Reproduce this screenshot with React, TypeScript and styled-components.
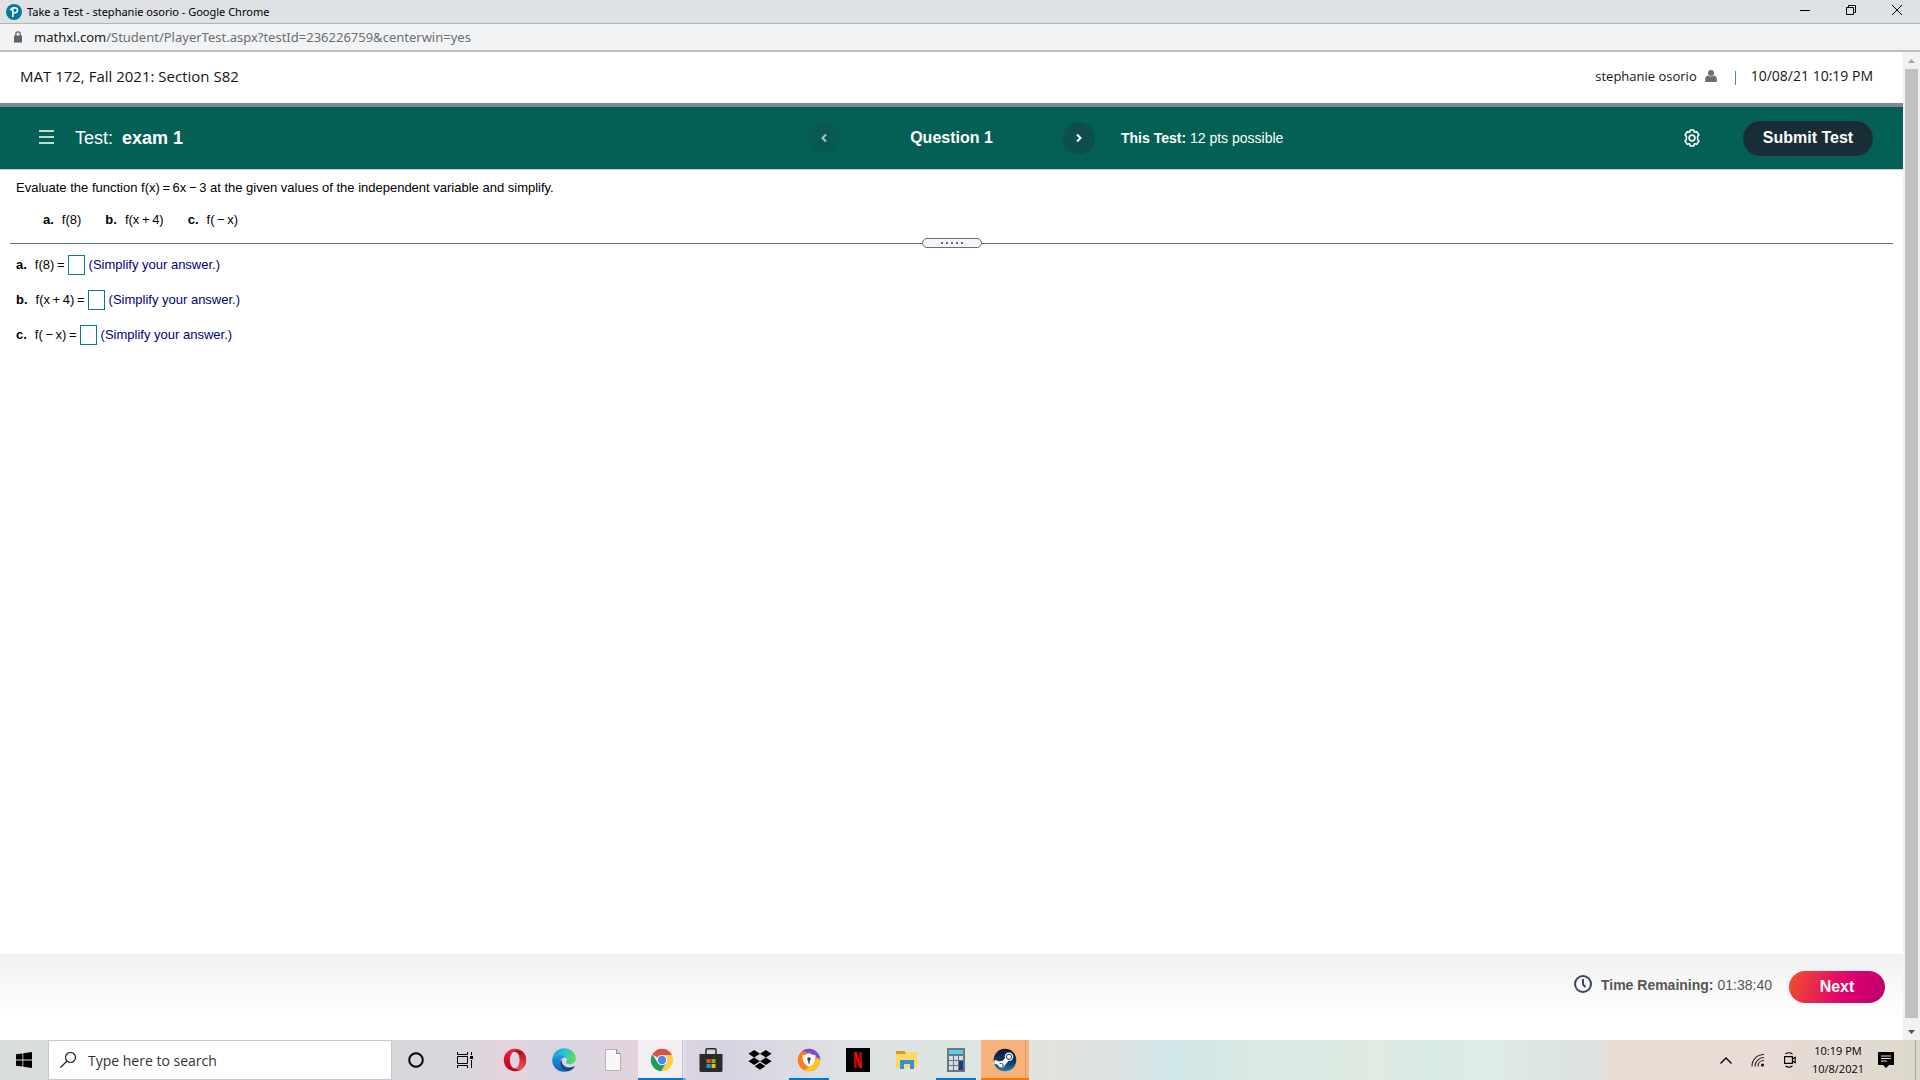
import React, { ReactNode } from "react";
import styled, { createGlobalStyle, css } from "styled-components";

const arial = '"Liberation Sans", Arial, sans-serif';
const system = '"Open Sans", "Noto Sans", sans-serif';
const chrome = '"Noto Sans", "Open Sans", sans-serif';

const GlobalStyle = createGlobalStyle`
  * { box-sizing: border-box; }
  body { margin: 0; background: #fff; color: #000; font-family: ${arial}; }
  button { font: inherit; color: inherit; border: 0; padding: 0; background: none; cursor: pointer; }
  svg { display: block; flex: none; }
`;

const Screen = styled.div`
  display: flex;
  flex-direction: column;
  height: 100vh;
  overflow: hidden;
`;

const TitleBar = styled.div`
  flex: none;
  display: flex;
  align-items: center;
  height: 24px;
  padding-left: 6px;
  gap: 5px;
  background: #dee1e6;
  border-bottom: 1px solid #b1b3b6;
  font: 11px/22px ${chrome};
`;

const WindowButtons = styled.div`
  display: flex;
  margin-left: auto;
  align-self: stretch;
`;

const WindowButton = styled.button`
  width: 46px;
  height: 20px;
  display: grid;
  place-items: center;
`;

const AddressBar = styled.div`
  flex: none;
  display: flex;
  align-items: center;
  gap: 12px;
  height: 28px;
  padding-left: 14px;
  background: #f1f3f4;
  border-bottom: 2px solid #bcbdbf;
  font: 13px/26px ${chrome};
  color: #6b6e73;
`;

const Host = styled.span`
  color: #202124;
`;

const Viewport = styled.div`
  flex: 1;
  min-height: 0;
  display: flex;
`;

const Page = styled.div`
  flex: 1;
  min-width: 0;
  display: flex;
  flex-direction: column;
`;

const Scrollbar = styled.div`
  flex: none;
  width: 17px;
  display: flex;
  flex-direction: column;
  align-items: center;
  background: #f1f1f1;
`;

const ScrollArrow = styled.button`
  width: 17px;
  height: 17px;
  display: grid;
  place-items: center;
`;

const ScrollThumb = styled.div`
  flex: 1;
  width: 13px;
  margin-bottom: 5px;
  background: #c1c1c1;
`;

const CourseHeader = styled.header`
  display: flex;
  align-items: center;
  height: 51px;
  padding: 0 30px 4px 20px;
  font: 15px/20px ${system};
  color: #151515;
`;

const CourseName = styled.h1`
  flex: 1;
  margin: 0;
  font: inherit;
`;

const UserName = styled.span`
  display: flex;
  align-items: center;
  gap: 8px;
  font-size: 13px;
`;

const Separator = styled.span`
  width: 1px;
  height: 14px;
  margin: 4px 15px 0 18px;
  background: #3b8fb5;
`;

const DateTime = styled.time`
  font-size: 14px;
`;

const TestBar = styled.div`
  display: grid;
  grid-template-columns: 1fr auto 1fr;
  align-items: center;
  height: 67px;
  padding: 0 30px;
  background: #046055;
  border-top: 4px solid #7f8995;
  border-bottom: 1px solid #c7d3dc;
  color: #fff;
`;

const TestTitle = styled.div`
  display: flex;
  align-items: center;
  gap: 20px;
  padding-left: 9px;
  font-size: 18px;
  line-height: 24px;

  b { margin-left: 4px; }
`;

const QuestionNav = styled.nav`
  display: flex;
  align-items: center;
  justify-content: space-between;
  width: 287px;
  font: bold 16px/24px ${arial};
`;

const RoundButton = styled.button`
  width: 32px;
  height: 32px;
  display: grid;
  place-items: center;
  border-radius: 50%;
  background: #0f4e4b;

  &:disabled {
    background: #075a51;
    color: #a5c5c1;
  }
`;

const BarRight = styled.div`
  display: flex;
  align-items: center;
  padding-left: 26px;
  font-size: 14px;
`;

const Points = styled.span`
  flex: 1;
`;

const SubmitButton = styled.button`
  width: 130px;
  height: 35px;
  margin-left: 42px;
  border-radius: 18px;
  background: #1a2c36;
  font: bold 16px/24px ${arial};
`;

const Exercise = styled.main`
  flex: 1;
  padding: 9px 10px 0;
  font-size: 13px;
  line-height: 18px;
`;

const Prompt = styled.p`
  margin: 0;
  padding-left: 6px;
`;

const Parts = styled.div`
  display: flex;
  gap: 24px;
  padding: 14px 0 0 33px;

  b { margin-right: 8px; }
`;

const Divider = styled.div`
  display: flex;
  align-items: center;
  margin-top: 9px;

  &::before, &::after {
    content: "";
    flex: 1;
    height: 1px;
    background: #64707d;
  }
`;

const DragHandle = styled.button`
  width: 60px;
  height: 10px;
  display: flex;
  align-items: center;
  justify-content: center;
  gap: 3px;
  border: 1px solid #64707d;
  border-radius: 5px;
  background: #f4f5f8;

  i { width: 2px; height: 2px; background: #64707d; }
`;

const Answers = styled.div`
  display: flex;
  flex-direction: column;
  gap: 15px;
  padding: 7px 0 0 6px;
`;

const AnswerRow = styled.label`
  display: flex;
  align-items: center;
  height: 20px;

  b { margin-right: 8px; }
`;

const AnswerBox = styled.input`
  width: 17px;
  height: 20px;
  margin: 0 4px 0 3px;
  padding: 0;
  border: 1px solid #047a9c;
  border-radius: 0;
  background: #fff;
`;

const Hint = styled.span`
  color: #00007f;
`;

const Footer = styled.footer`
  display: flex;
  justify-content: flex-end;
  align-items: flex-start;
  height: 86px;
  padding: 17px 18px 0 0;
  background: linear-gradient(#f1f1f1, #fff 75%);
  font-size: 14px;
  color: #555;
`;

const Timer = styled.div`
  display: flex;
  align-items: center;
  height: 28px;
  margin-right: 17px;

  svg { margin: 0 9px 3px 0; }
  b { margin-right: 4px; }
`;

const NextButton = styled.button`
  width: 96px;
  height: 32px;
  border-radius: 16px;
  background: linear-gradient(110deg, #ef4635 8%, #df006f 60%, #b9006f);
  color: #fff;
  font: bold 16px/24px ${arial};
`;

const Taskbar = styled.div`
  flex: none;
  display: flex;
  height: 40px;
  background: linear-gradient(90deg, #dadddd 0, #d6d8dc 400px, #d8d5dc 460px, #e4d3dc 500px, #d9d6e3 560px, #e2d2dc 640px, #d6d3e2 720px, #dde2e3 850px, #dce5df 980px, #e1e3dd 1050px, #dce2e0 1111px, #d1e6e7 1163px, #d3e7e5 1206px, #dceae5 1263px, #d8eae3 1298px, #e0eae2 1367px, #d9ece5 1423px, #dfebe5 1497px, #dce3e0 1579px, #dfe1de 1600px, #eadbd4 1615px, #e9dcd5 1750px, #ddd8cc 1920px);
  font-family: ${system};
`;

const SearchBox = styled.label`
  display: flex;
  align-items: center;
  gap: 12px;
  width: 344px;
  padding-left: 11px;
  border: 1px solid #c6c8c9;
  background: #fff;

  input {
    flex: 1;
    min-width: 0;
    border: 0;
    padding: 2px 0 0;
    outline: 0;
    background: none;
    font: 14px/20px ${system};
  }
  input::placeholder { color: #333; opacity: 1; }
`;

const TaskButton = styled.button<{ $state?: "open" | "active" | "alert"; $width?: number }>`
  flex: none;
  width: ${(p) => p.$width ?? 49}px;
  display: grid;
  place-items: center;

  ${(p) => p.$state === "open" && css`background: linear-gradient(#0078d7, #0078d7) center bottom / 40px 2px no-repeat;`}
  ${(p) => p.$state === "active" && css`
    background:
      linear-gradient(90deg, #0078d7 45px, #6fa9df 45px) right bottom / 48px 2px no-repeat,
      linear-gradient(90deg, #f3eef2 44px, #cbc0cf 44px, #cbc0cf 45px, #e0dbe6 45px) right top / 48px 100% no-repeat;
  `}
  ${(p) => p.$state === "alert" && css`
    background:
      linear-gradient(#ff7300, #ff7300) right bottom / 48px 2px no-repeat,
      linear-gradient(90deg, #f7b27c 44px, #dd9a68 44px, #dd9a68 45px, #f7b27c 45px) right top / 48px 100% no-repeat;
  `}
`;

const Tray = styled.div`
  display: flex;
  align-items: center;
  margin-left: auto;
`;

const TrayButton = styled.button`
  width: 32px;
  height: 40px;
  display: grid;
  place-items: center;
`;

const Clock = styled.time`
  width: 64px;
  text-align: center;
  font-size: 11px;
  line-height: 18px;
`;

const ShowDesktop = styled.button`
  width: 5px;
  height: 40px;
  margin-left: 13px;
  border-left: 1px solid #a9a59c;
`;

/* Operators in formulas are set with thin spaces. */
const answers = [
  { part: "a.", text: "f(8)\u2009=" },
  { part: "b.", text: "f(x\u2009+\u20094)\u2009=" },
  { part: "c.", text: "f(\u2009−\u2009x)\u2009=" },
];

const Chevron = ({ right }: { right?: boolean }) => (
  <svg width="8" height="10" viewBox="0 0 8 10" fill="none" stroke="currentColor" strokeWidth="2">
    <path d={right ? "M2 1.5 5.5 5 2 8.5" : "M6 1.5 2.5 5 6 8.5"} />
  </svg>
);

const OperaIcon = () => (
  <svg width="24" height="24" viewBox="0 0 24 24">
    <defs>
      <linearGradient id="opera" x1="0" y1="0" x2="0" y2="1">
        <stop offset="0" stopColor="#f5213a" />
        <stop offset="1" stopColor="#b30016" />
      </linearGradient>
      <linearGradient id="operaSide" x1="0" y1="0" x2="0" y2="1">
        <stop offset="0" stopColor="#a60f1b" />
        <stop offset="1" stopColor="#ff4b50" />
      </linearGradient>
    </defs>
    <path fillRule="evenodd" fill="url(#opera)" d="M12 .8a11.200 11.200 0 1 0 0 22.400A11.200 11.200 0 0 0 12 .8Zm0 2.800c3 0 4.800 3.800 4.800 8.400s-1.800 8.400-4.800 8.400S7 16.600 7 12s2-8.400 5-8.400Z" />
    <path fill="url(#operaSide)" d="M10 4c3-3 8-1.500 10 0 4 4 4 12 0 16-3 2-7 2.500-10 0 4.500 1.500 6.800-3 6.800-8S14 2.500 10 4Z" />
  </svg>
);

const EdgeIcon = () => (
  <svg width="24" height="24" viewBox="0 0 24 24">
    <defs>
      <linearGradient id="edgeTop" x1="0" y1=".3" x2="1" y2=".5">
        <stop offset="0" stopColor="#1f9fe0" />
        <stop offset=".5" stopColor="#2cc3d2" />
        <stop offset="1" stopColor="#62dc55" />
      </linearGradient>
      <linearGradient id="edgeSide" x1="0" y1="0" x2="0" y2="1">
        <stop offset="0" stopColor="#1b9de2" />
        <stop offset="1" stopColor="#1160b4" />
      </linearGradient>
    </defs>
    <path fill="url(#edgeTop)" d="M.3 11C1 4.500 6 .2 12 .2 19 .2 23.800 5 23.800 10.300c0 3.500-2.600 6-6 6-2.700 0-3.900-1-3.900-1.600 0-.5 1-1 1-2.600 0-2.700-3-4.900-6.700-4.900C4.500 7.200 1.500 8.700.3 11Z" />
    <path fill="url(#edgeSide)" d="M.2 12.500C.2 9 3.700 7 8 7c2.500 0 5 1 6.200 2.700C10.500 9 8 11.500 8 14.800c0 4 3 7.500 6.500 8.700-.8.200-1.700.3-2.500.3C5.500 23.800.2 18.600.2 12.500Z" />
    <path fill="#134b91" d="M9.800 11.500c-.7 4.500 3.200 8 7.700 8 1.900 0 3.500-.5 4.700-1.200.4-.2.7.1.500.5-1.500 2.600-4.600 4.700-8 4.700C10.500 22.500 8 18.800 8 15.200c0-1.500.7-2.900 1.800-3.700Z" />
  </svg>
);

const FileIcon = () => (
  <svg width="18" height="24" viewBox="0 0 18 24">
    <path d="M1.500 1.500h11l4 4v17h-15Z" fill="#f8f8f8" stroke="#b4b1b6" />
    <path d="M12.500 1.500v4h4" fill="#ddd" stroke="#8c8a8e" />
  </svg>
);

const ChromeIcon = () => (
  <svg width="24" height="24" viewBox="0 0 24 24">
    <path fill="#dd5144" d="M12 12 2.300 6.400a11.200 11.200 0 0 1 19.400 0L22 7H12Z" />
    <path fill="#ffcd46" d="M12 7h9.900A11.200 11.200 0 0 1 11.500 23.200L16.300 14.500Z" />
    <path fill="#1e9e5a" d="M2.300 6.400 7.700 14.500 12 17l3.700-1.500-4.500 7.700A11.200 11.200 0 0 1 2.300 6.400Z" />
    <circle cx="12" cy="12" r="5.200" fill="#f3f3f3" />
    <circle cx="12" cy="12" r="4.200" fill="#4a8af4" />
  </svg>
);

const StoreIcon = () => (
  <svg width="24" height="24" viewBox="0 0 24 24">
    <path d="M7 6V2q0-1.300 1.300-1.300h7.400Q17 .7 17 2v4" fill="none" stroke="#2b2b2b" strokeWidth="1.500" />
    <path d="M.5 6h23v16.500q0 1.500-1.500 1.500H2q-1.500 0-1.500-1.500Z" fill="#2b2b2b" />
    <path fill="#f25022" d="M7.500 11h4v4h-4z" />
    <path fill="#7fba00" d="M12.500 11h4v4h-4z" />
    <path fill="#00a4ef" d="M7.500 16h4v4h-4z" />
    <path fill="#ffb900" d="M12.500 16h4v4h-4z" />
  </svg>
);

const DropboxIcon = () => (
  <svg width="24" height="22" viewBox="0 0 24 22">
    <path d="m6.200 1 5.800 3.700-5.800 3.700L.4 4.700Zm11.600 0 5.800 3.700-5.800 3.700L12 4.700ZM6.200 8.500l5.800 3.700-5.800 3.700-5.800-3.700Zm11.600 0 5.800 3.700-5.800 3.700-5.800-3.700ZM12 13.700l5.300 3.500-5.300 3.500-5.300-3.500Z" />
  </svg>
);

const AvastIcon = () => (
  <svg width="24" height="24" viewBox="0 0 24 24">
    <circle cx="12" cy="12" r="11.200" fill="#ff7b1c" />
    <path fill="#7a4be0" d="M5.500 3A11.200 11.200 0 0 1 23.200 12L20 13 18 7 11 5Z" />
    <path fill="#ffc91c" d="M23.200 12A11.200 11.200 0 0 1 7 22l4-2 8-8 .5-3Z" />
    <path fill="#fff" d="M12 5c2 1.500 4 2 6.300 2 .8 5-1.300 9.500-6.300 12-5-2.500-7.100-7-6.300-12C8 7 10 6.500 12 5Z" />
    <circle cx="12" cy="11" r="1.800" fill="#2f3850" />
    <path fill="#2f3850" d="M11.300 12h1.400v3.500h-1.400z" />
  </svg>
);

const NetflixIcon = () => (
  <svg width="24" height="24" viewBox="0 0 24 24">
    <path d="M0 0h24v24H0z" />
    <path fill="#b1060f" d="M8 4h2.700v16L8 20.300ZM13.300 4H16v16.300l-2.700-.3Z" />
    <path fill="#e50914" d="M8 4h2.700L16 20.300l-2.800-.3Z" />
  </svg>
);

const ExplorerIcon = () => (
  <svg width="24" height="24" viewBox="0 0 24 24">
    <path fill="#d99a0b" d="M1 3h8.500l1.500 2v3H1Z" />
    <path fill="#ffd866" d="M1 6h9l2-2h10v16H1Z" />
    <path fill="#3a8fd2" d="M5 12h14v9h-4v-5H9v5H5Z" />
  </svg>
);

const CalculatorIcon = () => (
  <svg width="24" height="24" viewBox="0 0 24 24">
    <path fill="#6d7680" d="M3 0h18v24H3z" />
    <path fill="#4fd0f5" d="M5 2h14v4H5z" />
    <path fill="#d9dcdf" d="M5 8h4v4H5zm5 0h4v4h-4zm5 0h4v4h-4zM5 13h4v4H5zm5 0h4v4h-4zM5 18h4v4H5zm5 0h4v4h-4z" />
    <path fill="#123f86" d="M15 13h4v9h-4z" />
  </svg>
);

const SteamIcon = () => (
  <svg width="24" height="24" viewBox="0 0 24 24">
    <defs>
      <linearGradient id="steam" x1="0" y1="0" x2="0" y2="1">
        <stop offset="0" stopColor="#10193a" />
        <stop offset=".6" stopColor="#0e3a68" />
        <stop offset="1" stopColor="#1786b8" />
      </linearGradient>
    </defs>
    <circle cx="12" cy="12" r="11.300" fill="url(#steam)" />
    <path d="M1.300 13.500 8 16.200" stroke="#fff" strokeWidth="3.600" />
    <path d="m9.500 16.500 6-7" stroke="#fff" strokeWidth="4.500" />
    <circle cx="8.500" cy="16.200" r="3.200" fill="#fff" />
    <path d="M6.500 15.800q2.500-1.500 3.600.5t-1.200 2" stroke="#1a5080" fill="none" />
    <circle cx="16" cy="8.800" r="4.200" fill="#fff" />
    <circle cx="16" cy="8.800" r="2.600" fill="#fff" stroke="#14345f" />
  </svg>
);

const tasks: { name: string; icon: ReactNode; state?: "open" | "active" | "alert" }[] = [
  { name: "Opera", icon: <OperaIcon /> },
  { name: "Edge", icon: <EdgeIcon /> },
  { name: "File", icon: <FileIcon /> },
  { name: "Chrome", icon: <ChromeIcon />, state: "active" },
  { name: "Store", icon: <StoreIcon /> },
  { name: "Dropbox", icon: <DropboxIcon /> },
  { name: "Secure Browser", icon: <AvastIcon />, state: "open" },
  { name: "Netflix", icon: <NetflixIcon /> },
  { name: "File Explorer", icon: <ExplorerIcon /> },
  { name: "Calculator", icon: <CalculatorIcon />, state: "open" },
  { name: "Steam", icon: <SteamIcon />, state: "alert" },
];

export default function App() {
  return (
    <Screen>
      <GlobalStyle />
      <TitleBar>
        <svg width="16" height="16" viewBox="0 0 16 16">
          <circle cx="8" cy="8" r="8" fill="#047a9c" />
          <path d="M6.800 13V4.500M4.500 6.500C5 3.500 11.500 2.500 11.500 6.200c0 2-1.800 3-4.200 2.800" fill="none" stroke="#fff" strokeWidth="1.600" />
        </svg>
        <span>Take a Test - stephanie osorio - Google Chrome</span>
        <WindowButtons>
          <WindowButton aria-label="Minimize">
            <svg width="10" height="10"><path d="M0 5.500h10" stroke="#000" /></svg>
          </WindowButton>
          <WindowButton aria-label="Restore">
            <svg width="10" height="10" fill="none" stroke="#000"><path d="M.5 2.500h7v7h-7zM2.500 2V.5h7v7H8" /></svg>
          </WindowButton>
          <WindowButton aria-label="Close">
            <svg width="10" height="10" stroke="#000"><path d="m0 0 10 10M10 0 0 10" /></svg>
          </WindowButton>
        </WindowButtons>
      </TitleBar>
      <AddressBar>
        <svg width="8" height="12" viewBox="0 0 8 12">
          <path fill="#5f6368" d="M0 4.500h8V11.500H0z" />
          <path d="M1.800 5V3a2.200 2.200 0 0 1 4.400 0v2" fill="none" stroke="#5f6368" strokeWidth="1.200" />
        </svg>
        <span><Host>mathxl.com</Host>/Student/PlayerTest.aspx?testId=236226759&amp;centerwin=yes</span>
      </AddressBar>

      <Viewport>
        <Page>
          <CourseHeader>
            <CourseName>MAT 172, Fall 2021: Section S82</CourseName>
            <UserName>
              stephanie osorio
              <svg width="12" height="12" viewBox="0 0 12 12" fill="#6a7070">
                <circle cx="6" cy="3" r="3" />
                <path d="M3 5.500q3 2 6 0 2.800.5 2.800 4V12H.2V9.500q0-3.500 2.800-4Z" />
              </svg>
            </UserName>
            <Separator />
            <DateTime>10/08/21 10:19 PM</DateTime>
          </CourseHeader>

          <TestBar>
            <TestTitle>
              <button aria-label="Menu">
                <svg width="16" height="16" stroke="#fff" strokeWidth="1.600"><path d="M0 1h15M0 7h15M0 13h15" /></svg>
              </button>
              <span>Test: <b>exam 1</b></span>
            </TestTitle>
            <QuestionNav>
              <RoundButton disabled aria-label="Previous question"><Chevron /></RoundButton>
              <span>Question 1</span>
              <RoundButton aria-label="Next question"><Chevron right /></RoundButton>
            </QuestionNav>
            <BarRight>
              <Points><b>This Test:</b> 12 pts possible</Points>
              <button aria-label="Settings">
                <svg width="18" height="18" viewBox="0 0 18 18" fill="none" stroke="#fff" strokeWidth="1.600" strokeLinejoin="round">
                  <path d="M7.300 1h3.400l.7 2.200 2.300-.5 2.200 3L14.600 7.600v2.800l1.300 1.900-2.200 3-2.300-.5-.7 2.200H7.300l-.7-2.200-2.300.5-2.200-3 1.300-1.900V7.600L2.100 5.700l2.200-3 2.300.5Z" />
                  <circle cx="9" cy="9" r="2.900" />
                </svg>
              </button>
              <SubmitButton>Submit Test</SubmitButton>
            </BarRight>
          </TestBar>

          <Exercise>
            <Prompt>
              Evaluate the function {"f(x)\u2009=\u20096x\u2009−\u20093"} at the given values of the independent variable and simplify.
            </Prompt>
            <Parts>
              <span><b>a.</b>f(8)</span>
              <span><b>b.</b>{"f(x\u2009+\u20094)"}</span>
              <span><b>c.</b>{"f(\u2009−\u2009x)"}</span>
            </Parts>
            <Divider>
              <DragHandle aria-label="Resize panels"><i /><i /><i /><i /><i /></DragHandle>
            </Divider>
            <Answers>
              {answers.map((a) => (
                <AnswerRow key={a.part}>
                  <b>{a.part}</b>
                  {a.text}
                  <AnswerBox type="text" />
                  <Hint>(Simplify your answer.)</Hint>
                </AnswerRow>
              ))}
            </Answers>
          </Exercise>

          <Footer>
            <Timer>
              <svg width="18" height="18" viewBox="0 0 18 18" fill="none" stroke="#3c4a58" strokeWidth="2">
                <circle cx="9" cy="9" r="8" />
                <path d="M9 4v5.500l2.500 2.500" />
              </svg>
              <b>Time Remaining:</b>
              <span>01:38:40</span>
            </Timer>
            <NextButton>Next</NextButton>
          </Footer>
        </Page>
        <Scrollbar>
          <ScrollArrow aria-label="Scroll up">
            <svg width="7" height="4"><path d="M0 4 3.500 0 7 4Z" fill="#a3a3a3" /></svg>
          </ScrollArrow>
          <ScrollThumb />
          <ScrollArrow aria-label="Scroll down">
            <svg width="7" height="4"><path d="M0 0 3.500 4 7 0Z" fill="#505050" /></svg>
          </ScrollArrow>
        </Scrollbar>
      </Viewport>

      <Taskbar>
        <TaskButton $width={48} aria-label="Start">
          <svg width="16" height="16" viewBox="0 0 16 16"><path d="M0 2.300 6.500 1.400v6.200H0ZM7.300 1.200 16 0v7.600H7.300ZM0 8.400h6.500v6.200L0 13.700ZM7.300 8.400H16V16l-8.700-1.200Z" /></svg>
        </TaskButton>
        <SearchBox>
          <svg width="16" height="16" viewBox="0 0 16 16" fill="none" stroke="#222" strokeWidth="1.200">
            <circle cx="10.500" cy="5.500" r="5" />
            <path d="M7 9 .5 15.500" />
          </svg>
          <input aria-label="Search" placeholder="Type here to search" />
        </SearchBox>
        <TaskButton $width={48} aria-label="Cortana">
          <svg width="16" height="16" viewBox="0 0 16 16" fill="none" stroke="#000" strokeWidth="2"><circle cx="8" cy="8" r="6.800" /></svg>
        </TaskButton>
        <TaskButton $width={50} aria-label="Task view">
          <svg width="16" height="16" viewBox="0 0 16 16" fill="none" stroke="#000">
            <path d="M.5 0v2.500h10V0M.5 16v-2.500h10V16M.5 4.500h10v7H.5zM14.500 0v3M14.500 8v8" />
            <path d="M13 4h3v3h-3z" fill="#000" stroke="none" />
          </svg>
        </TaskButton>
        {tasks.map((t) => (
          <TaskButton key={t.name} $state={t.state} aria-label={t.name}>{t.icon}</TaskButton>
        ))}
        <Tray>
          <TrayButton aria-label="Show hidden icons">
            <svg width="12" height="7" fill="none" stroke="#000" strokeWidth="1.300"><path d="M.5 6.500 6 1l5.500 5.500" /></svg>
          </TrayButton>
          <TrayButton aria-label="Network">
            <svg width="14" height="14" viewBox="0 0 14 14" fill="none" stroke="#222" strokeWidth="1.100">
              <path d="M1 13.500C1 6.500 6 1.500 13 1.500M4 13.500C4 8.500 8 4.500 13 4.500M7 13.500c0-3.500 2.500-6 6-6" />
              <circle cx="11.500" cy="12" r="1.500" fill="#000" stroke="none" />
            </svg>
          </TrayButton>
          <TrayButton aria-label="Meet now">
            <svg width="12" height="16" viewBox="0 0 12 16" fill="none" stroke="#000" strokeWidth="1.100">
              <path d="M.6 4.600h7.800v6.800H.6zM8.400 7l2.800-1.800v5.600L8.400 9M1.500 2q3.500-2.400 7 0M1.500 14q3.500 2.400 7 0" />
            </svg>
          </TrayButton>
          <Clock>10:19 PM<br />10/8/2021</Clock>
          <TrayButton aria-label="Notifications">
            <svg width="16" height="16" viewBox="0 0 16 16">
              <path d="M0 0h16v13h-5l-3 3-3-3H0Z" />
              <path d="M3 4h10M3 6.500h10M3 9h6" stroke="#e4dfd8" />
            </svg>
          </TrayButton>
          <ShowDesktop aria-label="Show desktop" />
        </Tray>
      </Taskbar>
    </Screen>
  );
}
